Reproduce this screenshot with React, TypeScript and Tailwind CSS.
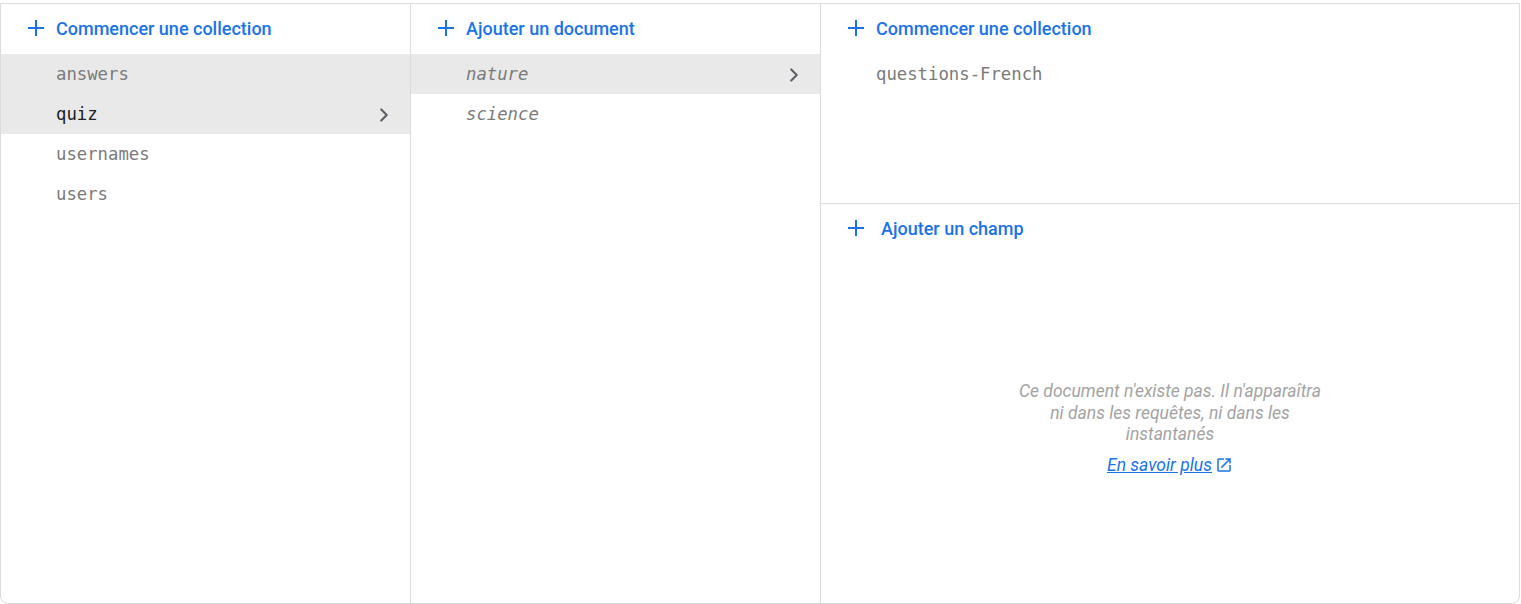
import { ChevronRight } from 'lucide-react';

const mono = "font-['DejaVu_Sans_Mono','Liberation_Mono',monospace]";
const roboto = "font-['Roboto','Liberation_Sans',sans-serif]";

const PlusIcon = ({ size = 18 }: { size?: number }) => (
    <svg width={size} height={size} viewBox="0 0 18 18" className="shrink-0">
        <path d="M9 1v16M1 9h16" stroke="#1a73e8" strokeWidth="2" fill="none" />
    </svg>
);

const ActionHeader = ({ label, gap = 'gap-[11px]' }: { label: string; gap?: string }) => (
    <button className={`flex h-[50px] w-full items-center ${gap} pb-[2px] pl-[26px] text-[#1a73e8] ${roboto} text-[18px] font-medium`}>
        <PlusIcon />
        <span>{label}</span>
    </button>
);

type Item = { name: string; active?: boolean; selected?: boolean };

const ListRow = ({ item, italic }: { item: Item; italic?: boolean }) => (
    <div
        className={`flex h-10 items-center justify-between pt-[2px] pl-[55px] pr-[15px] ${mono} text-[17.3px] ${italic ? 'italic' : ''} ${
            item.active ? 'bg-[#e9e9e9]' : ''
        } ${item.selected ? 'text-[#202124]' : 'text-[#7a7a7a]'}`}
    >
        <span>{item.name}</span>
        {item.active && item.name !== 'answers' && <ChevronRight size={22} strokeWidth={2.4} className="text-[#5f6368]" />}
    </div>
);

const collections: Item[] = [
    { name: 'answers', active: true },
    { name: 'quiz', active: true, selected: true },
    { name: 'usernames' },
    { name: 'users' },
];

const documents: Item[] = [{ name: 'nature', active: true }, { name: 'science' }];

export default function App() {
    return (
        <div className="h-[604px] w-[1521px] bg-white pt-[3px]">
            <div className="flex h-[601px] w-[1520px] overflow-hidden rounded-b-lg border border-[#dadce0]">
                <div className="w-[410px] shrink-0 border-r border-[#dadce0]">
                    <ActionHeader label="Commencer une collection" />
                    {collections.map(c => (
                        <ListRow key={c.name} item={c} />
                    ))}
                </div>

                <div className="w-[410px] shrink-0 border-r border-[#dadce0]">
                    <ActionHeader label="Ajouter un document" />
                    {documents.map(d => (
                        <ListRow key={d.name} item={d} italic />
                    ))}
                </div>

                <div className="flex flex-1 flex-col">
                    <div className="h-[200px] border-b border-[#dadce0]">
                        <ActionHeader label="Commencer une collection" />
                        <div className={`flex h-10 items-center pt-[2px] pl-[55px] ${mono} text-[17.3px] text-[#7a7a7a]`}>questions-French</div>
                    </div>
                    <ActionHeader label="Ajouter un champ" gap="gap-4" />
                    <div className="flex flex-1 flex-col items-center pt-[127px]">
                        <p className={`w-[312px] text-center ${roboto} text-[17.5px] italic leading-[21.5px] text-[#a3a3a3]`}>
                            Ce document n'existe pas. Il n'apparaîtra ni dans les requêtes, ni dans les instantanés
                        </p>
                        <a className={`mt-[6px] flex items-center gap-[3px] ${roboto} text-[17.5px] italic text-[#1a73e8] underline`}>
                            En savoir plus
                            <svg width="18" height="18" viewBox="0 0 24 24" className="not-italic">
                                <path
                                    d="M19 19H5V5h7V3H5a2 2 0 0 0-2 2v14a2 2 0 0 0 2 2h14c1.1 0 2-.9 2-2v-7h-2v7zM14 3v2h3.59l-9.83 9.83 1.41 1.41L19 6.41V10h2V3h-7z"
                                    fill="#1a73e8"
                                />
                            </svg>
                        </a>
                    </div>
                </div>
            </div>
        </div>
    );
}
